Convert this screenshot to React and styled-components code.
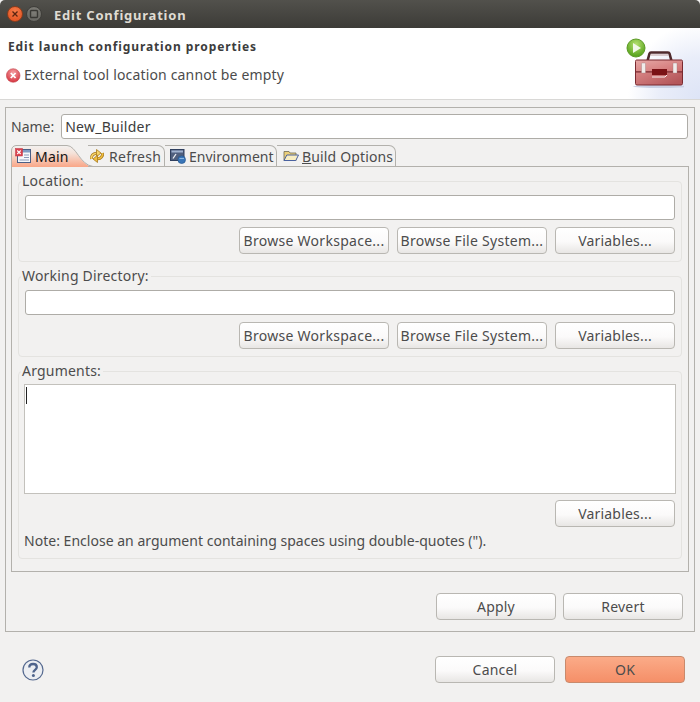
import React from "react";
import styled, { createGlobalStyle } from "styled-components";

const GlobalStyle = createGlobalStyle`
  html, body {
    margin: 0;
    padding: 0;
    background: #f2f1f0;
  }
  * {
    box-sizing: border-box;
  }
`;

const Window = styled.div`
  width: 700px;
  height: 702px;
  display: flex;
  flex-direction: column;
  background: #f2f1f0;
  font-family: "Noto Sans", sans-serif;
  font-size: 14px;
  letter-spacing: 0.2px;
  color: #4c4c4c;
  overflow: hidden;
`;

const TitleBar = styled.div`
  height: 28px;
  flex: none;
  display: flex;
  align-items: center;
  padding-left: 7px;
  gap: 3px;
  border-radius: 5px 5px 0 0;
  background: linear-gradient(#52514c, #3c3b37);
`;

const WinButton = styled.div`
  width: 16px;
  height: 16px;
  border-radius: 50%;
  display: flex;
  align-items: center;
  justify-content: center;
  background: ${(p) => (p.$close ? "radial-gradient(circle at 50% 30%, #f57a48, #e04e1c)" : "radial-gradient(circle at 50% 30%, #807f79, #63625d)")};
  border: 1px solid ${(p) => (p.$close ? "#8a3c1c" : "#3f3e3a")};
`;

const WinTitle = styled.div`
  margin-left: 9px;
  padding-top: 1px;
  font-weight: 700;
  font-size: 13px;
  letter-spacing: 0.78px;
  color: #dfdbd2;
`;

const Header = styled.div`
  height: 72px;
  flex: none;
  display: flex;
  justify-content: space-between;
  background:
    radial-gradient(ellipse 72px 76px at 100% 100%, #dde4f6 0%, #e9edf9 55%, rgba(255, 255, 255, 0) 100%),
    #ffffff;
  border-bottom: 1px solid #d9d8d6;
`;

const HeaderText = styled.div`
  display: flex;
  flex-direction: column;
  padding: 10px 0 0 8px;
  gap: 9px;
`;

const HeaderTitle = styled.div`
  font-weight: 700;
  font-size: 12px;
  line-height: 18px;
  letter-spacing: 0.9px;
  color: #3c3c3c;
`;

const ErrorRow = styled.div`
  display: flex;
  align-items: center;
  gap: 3px;
  margin-left: -2px;
  line-height: 20px;
  letter-spacing: 0.16px;
`;

const HeaderArt = styled.div`
  padding: 8px 16px 0 0;
`;

const Outer = styled.div`
  margin: 7px 5px 0;
  height: 525px;
  flex: none;
  border: 1px solid #b3b1ac;
  display: flex;
  flex-direction: column;
  padding: 6px 5px 0;
`;

const NameRow = styled.div`
  display: flex;
  align-items: center;
  gap: 7px;
  padding-right: 1px;
`;

const Label = styled.label`
  line-height: 18px;
  letter-spacing: 0;
`;

const Field = styled.input`
  flex: ${(p) => (p.$grow ? 1 : "none")};
  width: 100%;
  height: 25px;
  border: 1px solid #aeaca7;
  border-radius: 3px;
  background: #fff;
  font: inherit;
  letter-spacing: 0.25px;
  color: #3c3c3c;
  padding: 0 3px;
  outline: none;
`;

const Folder = styled.div`
  margin-top: 6px;
  height: 427px;
  flex: none;
  display: flex;
  flex-direction: column;
`;

const TabStrip = styled.div`
  display: flex;
  height: 22px;
  flex: none;
  position: relative;
  z-index: 1;
`;

const Tab = styled.div`
  display: flex;
  align-items: center;
  gap: ${(p) => p.$gap || 3}px;
  height: 22px;
  width: ${(p) => p.$w}px;
  padding-left: ${(p) => p.$pad || 1}px;
  letter-spacing: ${(p) => p.$spacing || 0.2}px;
  border: 1px solid #b3b1ac;
  border-left: none;
  border-radius: 0 7px 0 0;
  white-space: nowrap;
  color: #4c4c4c;
`;

const ActiveTab = styled.div`
  position: relative;
  display: flex;
  align-items: center;
  gap: 4px;
  height: 22px;
  width: 77px;
  padding-left: 4px;
  color: #141414;
`;

const TabShape = styled.svg`
  position: absolute;
  left: 0;
  top: 0;
  z-index: -1;
`;

const FolderBody = styled.div`
  flex: 1;
  margin-top: -1px;
  border: 1px solid #b3b1ac;
  display: flex;
  flex-direction: column;
  gap: 5px;
  padding: 5px 6px 0;
`;

const Group = styled.fieldset`
  margin: 0;
  min-width: 0;
  border: 1px solid #e4e3e0;
  border-radius: 4px;
  padding: 5px 6px 7px;
  display: flex;
  flex-direction: column;
  gap: 7px;
  height: ${(p) => p.$h}px;
`;

const Legend = styled.legend`
  padding: 0 2px 0 1px;
  margin-left: -4px;
  line-height: 18px;
`;

const ArgsBox = styled.div`
  height: 110px;
  flex: none;
  margin: -1px;
  background: #fff;
  border: 1px solid #c3c1bc;
  padding: 2px 1px;
`;

const Caret = styled.div`
  width: 1px;
  height: 17px;
  background: #222;
`;

const ButtonRow = styled.div`
  display: flex;
  justify-content: flex-end;
  gap: ${(p) => p.$gap || 8}px;
`;

const Btn = styled.div`
  width: ${(p) => p.$w || 120}px;
  height: 27px;
  display: flex;
  align-items: center;
  justify-content: center;
  white-space: nowrap;
  letter-spacing: ${(p) => (p.$w ? "0.28px" : "0.2px")};
  border: 1px solid ${(p) => (p.$primary ? "#c98a6c" : "#b9b7b2")};
  border-radius: 4px;
  background: ${(p) =>
    p.$primary
      ? "linear-gradient(#fbab88, #f58f68)"
      : "linear-gradient(#ffffff, #fbfafa 55%, #e8e6e4)"};
  color: #4c4c4c;
`;

const ApplyRow = styled(ButtonRow)`
  margin-top: 21px;
  padding-right: 6px;
`;

const Note = styled.div`
  line-height: 18px;
  margin: -2px 0 0 -1px;
  letter-spacing: 0.02px;
`;

const Underlined = styled.span`
  text-decoration: underline;
`;

const Footer = styled.div`
  display: flex;
  align-items: center;
  justify-content: space-between;
  margin-top: 24px;
  padding: 0 15px 0 22px;
`;

const FooterButtons = styled.div`
  display: flex;
  gap: 10px;
`;

const CloseGlyph = () => (
  <svg width="8" height="8" viewBox="0 0 8 8">
    <path d="M1.500 1.500l5 5M6.500 1.500l-5 5" stroke="#5a2410" strokeWidth="1.300" />
  </svg>
);

const MinGlyph = () => (
  <svg width="10" height="10" viewBox="0 0 10 10">
    <rect x="1.500" y="1.500" width="7" height="7" rx="1" fill="none" stroke="#393834" strokeWidth="1.400" />
  </svg>
);

const ErrorIcon = () => (
  <svg width="15" height="15" viewBox="0 0 15 15">
    <defs>
      <radialGradient id="err" cx="50%" cy="30%" r="70%">
        <stop offset="0" stopColor="#f4a0a4" />
        <stop offset="1" stopColor="#d6343f" />
      </radialGradient>
    </defs>
    <circle cx="7.200" cy="7.500" r="6.800" fill="url(#err)" stroke="#c2454c" strokeWidth="0.600" />
    <path d="M4.800 5l4.800 5M9.600 5l-4.800 5" stroke="#fff" strokeWidth="1.800" />
  </svg>
);

const ToolboxArt = () => (
  <svg width="58" height="56" viewBox="0 0 58 56">
    <defs>
      <radialGradient id="play" cx="50%" cy="30%" r="75%">
        <stop offset="0" stopColor="#b6e070" />
        <stop offset="1" stopColor="#4a9a10" />
      </radialGradient>
      <linearGradient id="lid" x1="0" y1="0" x2="1" y2="1">
        <stop offset="0" stopColor="#e6a8a6" />
        <stop offset="1" stopColor="#cf6d6e" />
      </linearGradient>
      <linearGradient id="box" x1="0" y1="0" x2="1" y2="0.600">
        <stop offset="0" stopColor="#d98686" />
        <stop offset="1" stopColor="#b4565a" />
      </linearGradient>
    </defs>
    <ellipse cx="34" cy="50.500" rx="27" ry="1.500" fill="#c9d0e4" />
    <circle cx="10" cy="12" r="9" fill="url(#play)" stroke="#5c9a26" />
    <path d="M7 7l8 5-8 5z" fill="#f2f8e8" />
    <path d="M21.500 25l2-7.500q.3-1 1.500-1h17q1.200 0 1.500 1l2 7.500" fill="none" stroke="#4e2a2c" strokeWidth="2.600" />
    <path d="M25 19h17" stroke="#b08c8c" strokeWidth="0.800" />
    <path d="M10.500 24h45q1 0 1 1.500V36H9.500V25.500q0-1.500 1-1.500z" fill="url(#lid)" stroke="#7a2a30" />
    <path d="M9.500 36h47v11.500q0 1.500-1.500 1.500H11q-1.500 0-1.500-1.500z" fill="url(#box)" stroke="#7a2a30" />
    <rect x="15.500" y="27" width="4" height="10" rx="0.500" fill="#f0ecea" stroke="#a07878" strokeWidth="0.400" />
    <rect x="47" y="27" width="4" height="10" rx="0.500" fill="#f0ecea" stroke="#a07878" strokeWidth="0.400" />
    <rect x="26" y="33" width="15" height="6" fill="#7a1216" />
    <path d="M26 41h13l2-2" fill="none" stroke="#f8eeee" strokeWidth="1" />
  </svg>
);

const MainIcon = () => (
  <svg width="16" height="16" viewBox="0 0 16 16">
    <rect x="2.500" y="1.500" width="13" height="13" fill="#f6f8fb" stroke="#4a5f86" />
    <rect x="3" y="2" width="12" height="2.500" fill="#7f9cc4" />
    <path d="M9 7h5M9 9.500h5M4.500 12h9.500" stroke="#8a9aba" />
    <rect x="0.500" y="0.500" width="7" height="7.500" fill="#d8414e" stroke="#c4303e" strokeWidth="0.500" />
    <path d="M2.200 2.500l3.500 3.500M5.700 2.500L2.200 6" stroke="#fff" strokeWidth="1.100" />
  </svg>
);

const RefreshIcon = () => (
  <svg width="16" height="16" viewBox="0 0 16 16" fill="none">
    <path d="M2.500 11C2 8 4 5.500 7.500 5.200" stroke="#a8781c" strokeWidth="3" />
    <path d="M2.500 11C2 8 4 5.500 7.500 5.200" stroke="#f6d568" strokeWidth="1.600" />
    <path d="M7.500 1.500l4.500 3.500-4.500 3.800z" fill="#f6d568" stroke="#a8781c" strokeWidth="0.800" strokeLinejoin="round" />
    <path d="M13.500 5C14 8 12 10.500 8.500 10.800" stroke="#a8781c" strokeWidth="3" />
    <path d="M13.500 5C14 8 12 10.500 8.500 10.800" stroke="#efbe3e" strokeWidth="1.600" />
    <path d="M8.500 14.500L4 11l4.500-3.800z" fill="#efbe3e" stroke="#a8781c" strokeWidth="0.800" strokeLinejoin="round" />
  </svg>
);

const EnvIcon = () => (
  <svg width="16" height="16" viewBox="0 0 16 16">
    <rect x="0.500" y="1.500" width="13.500" height="11" fill="#4f5f7e" stroke="#2f3f5e" />
    <rect x="1.500" y="2.500" width="11.500" height="2" fill="#9fb2d0" />
    <path d="M3 10.500l3-4.500" stroke="#eef1f6" strokeWidth="1.300" />
    <circle cx="11.700" cy="11.700" r="3.800" fill="#3a76b8" stroke="#24578f" strokeWidth="0.700" />
    <path d="M9.500 10.500h4.500" stroke="#8cb8e4" strokeWidth="1" />
  </svg>
);

const FolderIcon = () => (
  <svg width="16" height="16" viewBox="0 0 16 16">
    <path d="M1 3.500h5l1 1.500h6v7.500H1z" fill="#eccf7a" stroke="#6f6a52" strokeWidth="0.800" />
    <path d="M1 12.500l2.800-5.500h11.700l-2.700 5.500z" fill="#f8edc2" stroke="#4a62a0" strokeWidth="1" strokeLinejoin="round" />
  </svg>
);

const HelpIcon = () => (
  <svg width="22" height="22" viewBox="0 0 22 22">
    <circle cx="11" cy="11" r="10" fill="#eceef2" stroke="#55698f" strokeWidth="1.200" />
    <path d="M7.300 8.500c0-2.300 1.700-3.500 3.800-3.500s3.700 1.200 3.700 3.200c0 2.700-3.400 2.600-3.400 5.300" fill="none" stroke="#4f648c" strokeWidth="2.300" />
    <circle cx="11.400" cy="16.500" r="1.500" fill="#4f648c" />
  </svg>
);

function ActionButtons() {
  return (
    <ButtonRow>
      <Btn $w={150}>Browse Workspace...</Btn>
      <Btn $w={150}>Browse File System...</Btn>
      <Btn>Variables...</Btn>
    </ButtonRow>
  );
}

export default function App() {
  return (
    <Window>
      <GlobalStyle />
      <TitleBar>
        <WinButton $close>
          <CloseGlyph />
        </WinButton>
        <WinButton>
          <MinGlyph />
        </WinButton>
        <WinTitle>Edit Configuration</WinTitle>
      </TitleBar>

      <Header>
        <HeaderText>
          <HeaderTitle>Edit launch configuration properties</HeaderTitle>
          <ErrorRow>
            <ErrorIcon />
            External tool location cannot be empty
          </ErrorRow>
        </HeaderText>
        <HeaderArt>
          <ToolboxArt />
        </HeaderArt>
      </Header>

      <Outer>
        <NameRow>
          <Label>Name:</Label>
          <Field $grow defaultValue="New_Builder" />
        </NameRow>

        <Folder>
          <TabStrip>
            <ActiveTab>
              <TabShape width="82" height="22" viewBox="0 0 82 22">
                <defs>
                  <linearGradient id="tabfill" x1="0" y1="0" x2="0" y2="1">
                    <stop offset="0" stopColor="#f2f1f0" />
                    <stop offset="0.35" stopColor="#f5e3da" />
                    <stop offset="1" stopColor="#f9a687" />
                  </linearGradient>
                </defs>
                <path d="M0.500 22V6Q0.500 1 5 0.500H56C65 0.500 69 20 81 21.500V22z" fill="url(#tabfill)" />
                <path d="M0.500 22V6Q0.500 1 5 0.500H56C65 0.500 69 20 82 21.500" fill="none" stroke="#b3b1ac" />
              </TabShape>
              <MainIcon />
              Main
            </ActiveTab>
            <Tab $w={77} $pad={1} $gap={4} $spacing={0.28}>
              <RefreshIcon />
              Refresh
            </Tab>
            <Tab $w={112} $pad={5} $spacing={0.01}>
              <EnvIcon />
              Environment
            </Tab>
            <Tab $w={119} $pad={6} $spacing={0.15}>
              <FolderIcon />
              <span>
                <Underlined>B</Underlined>uild Options
              </span>
            </Tab>
          </TabStrip>

          <FolderBody>
            <Group $h={90}>
              <Legend>Location:</Legend>
              <Field />
              <ActionButtons />
            </Group>
            <Group $h={90}>
              <Legend>Working Directory:</Legend>
              <Field />
              <ActionButtons />
            </Group>
            <Group $h={197}>
              <Legend>Arguments:</Legend>
              <ArgsBox>
                <Caret />
              </ArgsBox>
              <ButtonRow>
                <Btn>Variables...</Btn>
              </ButtonRow>
              <Note>Note: Enclose an argument containing spaces using double-quotes (&quot;).</Note>
            </Group>
          </FolderBody>
        </Folder>

        <ApplyRow $gap={7}>
          <Btn>Apply</Btn>
          <Btn>Revert</Btn>
        </ApplyRow>
      </Outer>

      <Footer>
        <HelpIcon />
        <FooterButtons>
          <Btn>Cancel</Btn>
          <Btn $primary>OK</Btn>
        </FooterButtons>
      </Footer>
    </Window>
  );
}
